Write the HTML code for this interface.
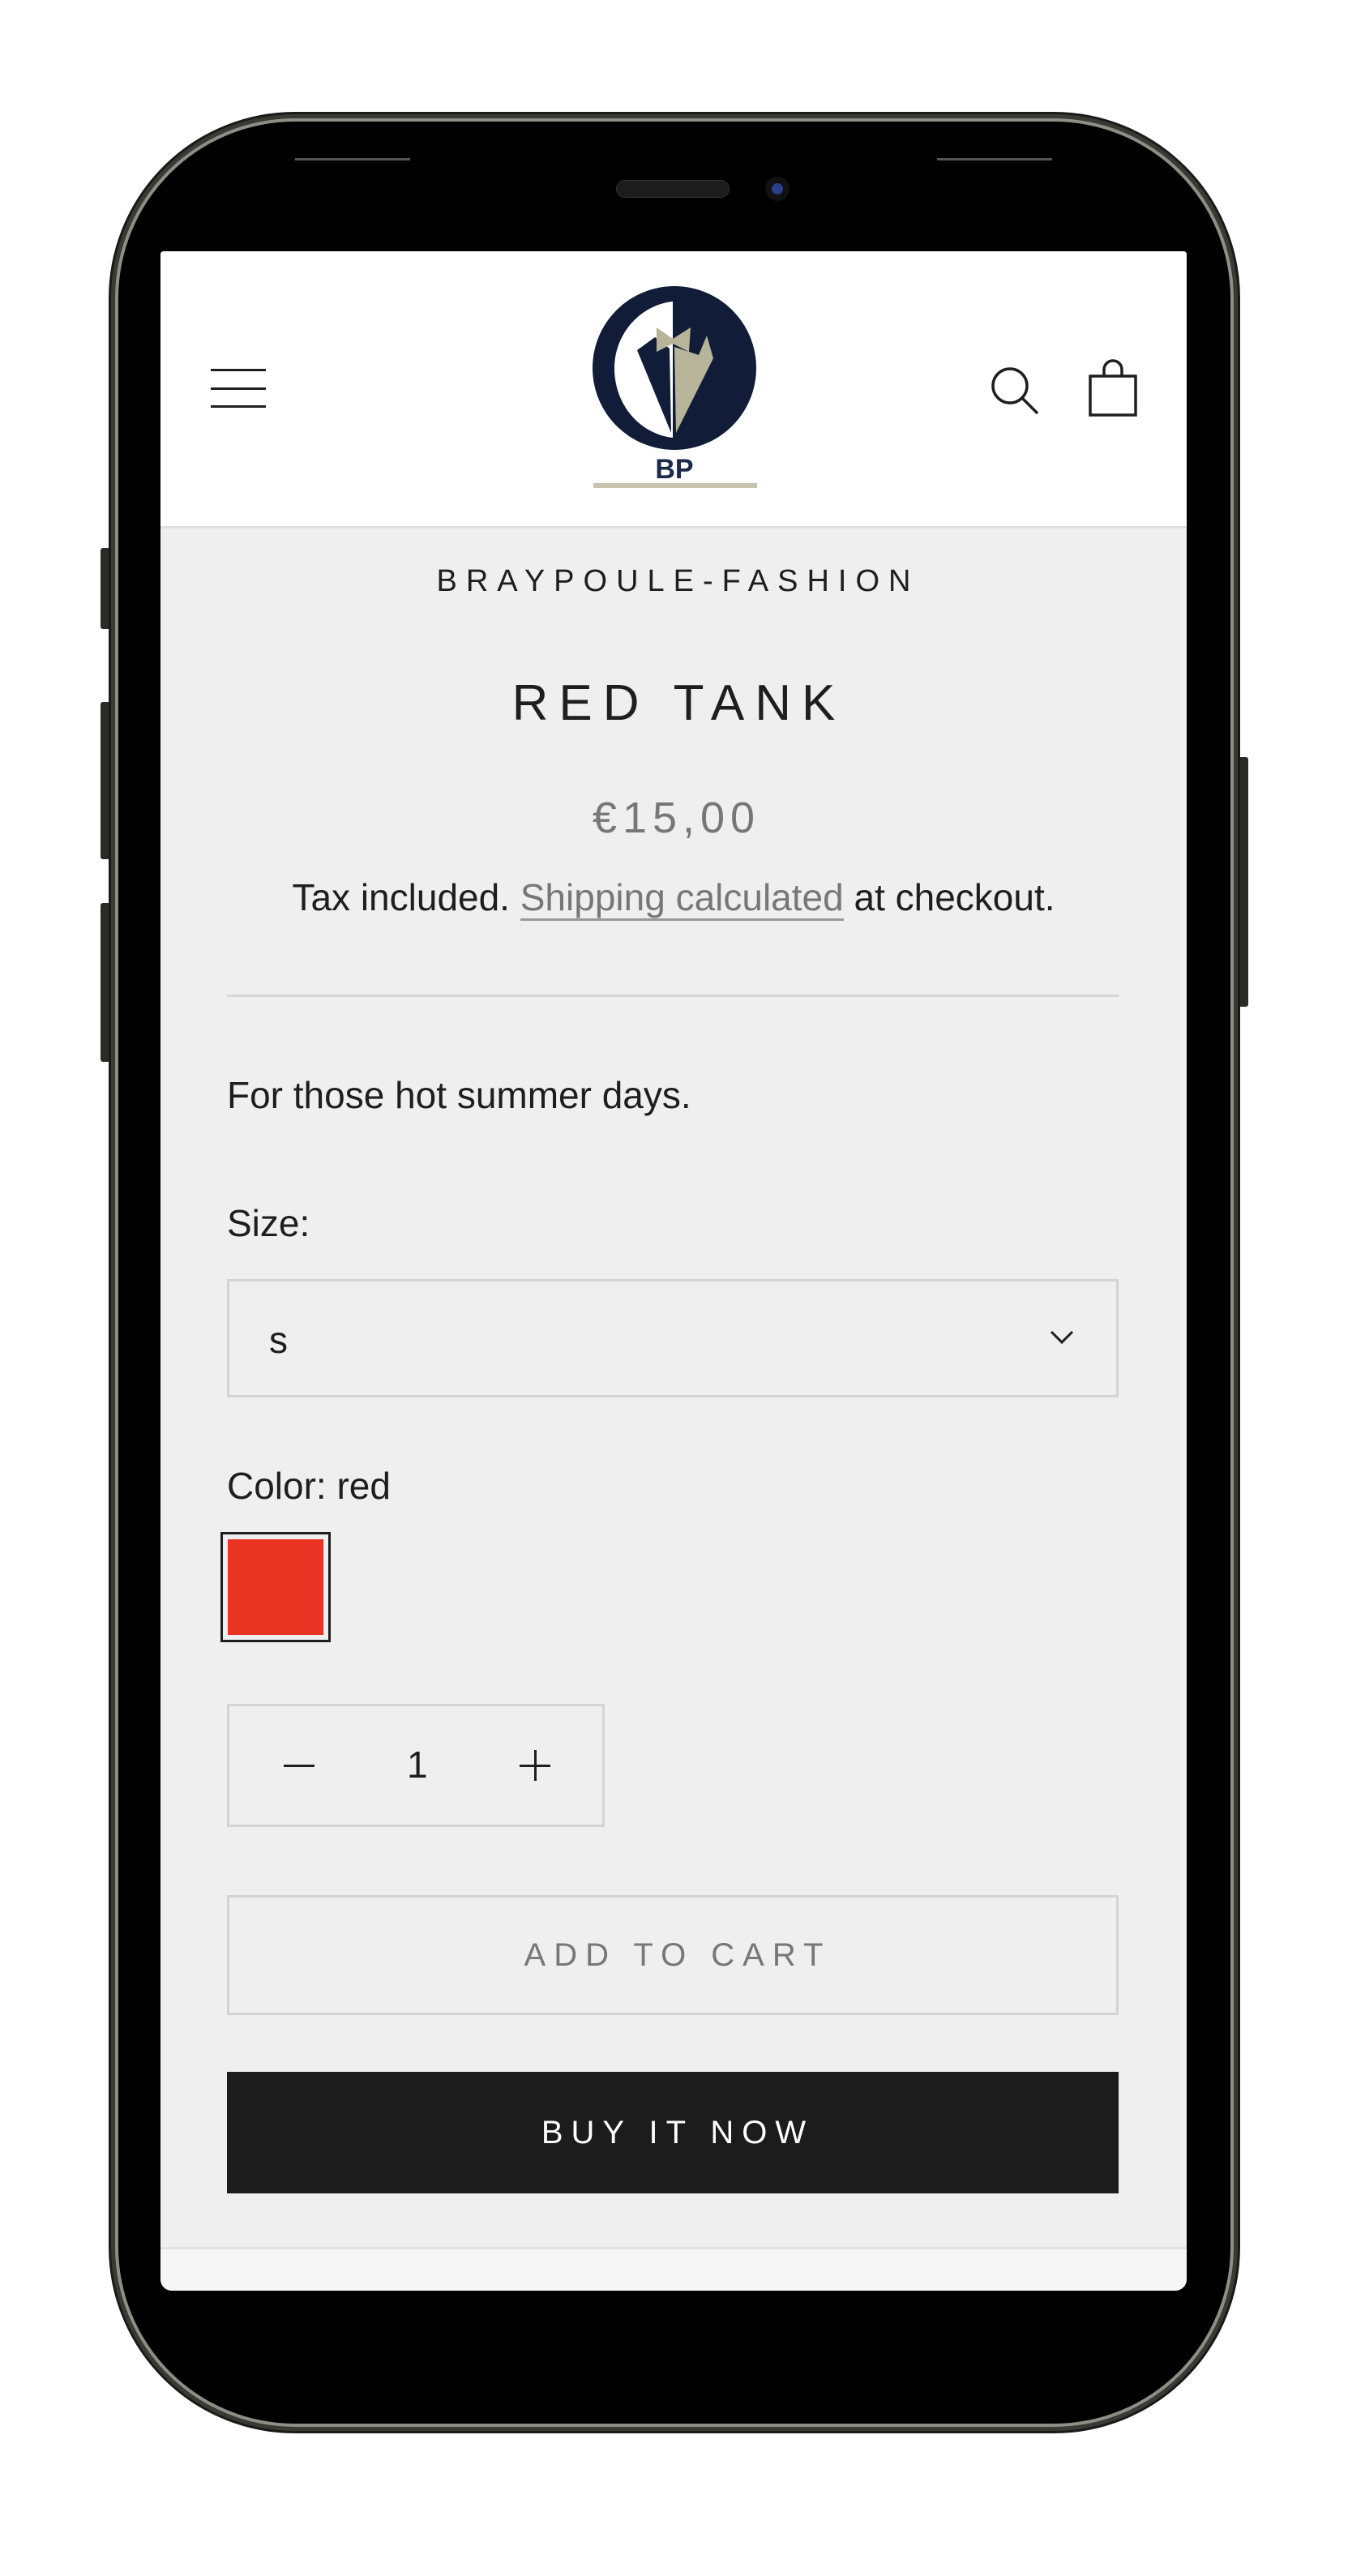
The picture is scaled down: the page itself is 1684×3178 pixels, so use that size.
<!DOCTYPE html>
<html><head><meta charset="utf-8"><style>
*{margin:0;padding:0;box-sizing:border-box}
html,body{width:1684px;height:3178px;background:#fff;overflow:hidden;font-family:"Liberation Sans",sans-serif}
.abs{position:absolute}
.c{position:absolute;left:198px;width:1266px;text-align:center;white-space:nowrap}
.t{position:absolute;white-space:nowrap;color:#1e1e1e;font-size:46px}
</style></head><body>
<!-- side buttons -->
<div class="abs" style="left:124px;top:676px;width:12px;height:100px;background:#2a2a26;border-radius:3px"></div>
<div class="abs" style="left:124px;top:866px;width:12px;height:194px;background:#2a2a26;border-radius:3px"></div>
<div class="abs" style="left:124px;top:1114px;width:12px;height:196px;background:#2a2a26;border-radius:3px"></div>
<div class="abs" style="left:1528px;top:934px;width:12px;height:308px;background:#2a2a26;border-radius:3px"></div>
<!-- phone body -->
<div class="abs" style="left:134px;top:138px;width:1396px;height:2864px;border-radius:230px;background:#3a3a35;border:3px solid #1a1a18"></div>
<div class="abs" style="left:146px;top:150px;width:1372px;height:2840px;border-radius:218px;background:#000;box-shadow:0 0 0 4px #8e8e86"></div>
<!-- top details -->
<div class="abs" style="left:364px;top:195px;width:142px;height:3px;background:#555"></div>
<div class="abs" style="left:1156px;top:195px;width:142px;height:3px;background:#555"></div>
<div class="abs" style="left:760px;top:222px;width:140px;height:22px;border-radius:11px;background:#1c1c1c;border:1px solid #333"></div>
<div class="abs" style="left:944px;top:218px;width:30px;height:30px;border-radius:50%;background:#111"></div>
<div class="abs" style="left:952px;top:226px;width:14px;height:14px;border-radius:50%;background:#2a3f8a"></div>
<!-- screen -->
<div class="abs" style="left:198px;top:310px;width:1266px;height:2516px;background:#efefef;overflow:hidden;border-radius:4px 4px 14px 14px">
  <div class="abs" style="left:0;top:0;width:1266px;height:342px;background:#fff;border-bottom:3px solid #e0e0e0"></div>
  <div class="abs" style="left:0;top:2462px;width:1266px;height:60px;background:#f6f6f6;border-top:3px solid #e2e2e2"></div>
</div>
<!-- hamburger -->
<div class="abs" style="left:260px;top:455px;width:68px;height:3px;background:#1e1e1e"></div>
<div class="abs" style="left:260px;top:478px;width:68px;height:3px;background:#1e1e1e"></div>
<div class="abs" style="left:260px;top:500px;width:68px;height:3px;background:#1e1e1e"></div>
<!-- logo -->
<svg class="abs" style="left:730px;top:352px" width="204" height="260" viewBox="0 0 204 260">
  <circle cx="102" cy="102" r="101" fill="#111d38"/>
  <path d="M100 20 C60 24 28 60 28 102 C28 150 62 184 100 188 Z" fill="#fff"/>
  <path d="M56 80 L98 182 L96 78 L78 64 Z" fill="#111d38"/>
  <path d="M80 52 L100 66 L122 52 L120 82 L100 72 L80 82 Z" fill="#b8b49a"/>
  <path d="M102 76 L104 182 L150 90 L142 62 L132 86 Z" fill="#b8b49a"/>
  <text x="102" y="238" text-anchor="middle" font-family="Liberation Sans" font-weight="bold" font-size="34" fill="#1b2a4a">BP</text>
  <rect x="2" y="244" width="202" height="6" fill="#c9c4ae"/>
</svg>
<!-- search -->
<svg class="abs" style="left:1220px;top:450px" width="66" height="66" viewBox="0 0 66 66"><circle cx="26" cy="26" r="21" fill="none" stroke="#1e1e1e" stroke-width="3.5"/><path d="M41 41 L60 60" stroke="#1e1e1e" stroke-width="3.5"/></svg>
<!-- bag -->
<svg class="abs" style="left:1340px;top:442px" width="66" height="74" viewBox="0 0 66 74"><rect x="5" y="22" width="56" height="48" fill="none" stroke="#1e1e1e" stroke-width="3.5"/><path d="M22 22 V14 a11 11 0 0 1 22 0 V22" fill="none" stroke="#1e1e1e" stroke-width="3.5"/></svg>
<!-- texts -->
<div class="c" style="top:696px;font-size:38px;letter-spacing:11px;color:#1e1e1e;padding-left:11px">BRAYPOULE-FASHION</div>
<div class="c" style="top:832px;font-size:62px;letter-spacing:13px;color:#1e1e1e;padding-left:13px">RED TANK</div>
<div class="c" style="top:978px;font-size:54px;letter-spacing:7px;color:#777;padding-left:7px">€15,00</div>
<div class="c" style="top:1080px;font-size:46px;color:#1e1e1e">Tax included. <span style="color:#777;border-bottom:3px solid #999">Shipping calculated</span> at checkout.</div>
<div class="abs" style="left:280px;top:1227px;width:1100px;height:3px;background:#d6d6d6"></div>
<div class="t" style="left:280px;top:1324px">For those hot summer days.</div>
<div class="t" style="left:280px;top:1482px">Size:</div>
<div class="abs" style="left:280px;top:1578px;width:1100px;height:146px;border:3px solid #d4d4d4"></div>
<div class="t" style="left:332px;top:1626px">s</div>
<svg class="abs" style="left:1294px;top:1640px" width="32" height="20" viewBox="0 0 32 20"><path d="M3 3 L16 16 L29 3" fill="none" stroke="#1e1e1e" stroke-width="3"/></svg>
<div class="t" style="left:280px;top:1806px">Color: red</div>
<div class="abs" style="left:272px;top:1890px;width:136px;height:136px;border:3px solid #1e1e1e"></div>
<div class="abs" style="left:281px;top:1899px;width:118px;height:118px;background:#e93323"></div>
<div class="abs" style="left:280px;top:2102px;width:466px;height:152px;border:3px solid #d4d4d4"></div>
<div class="abs" style="left:350px;top:2177px;width:38px;height:3px;background:#1e1e1e"></div>
<div class="t" style="left:502px;top:2150px;font-size:46px">1</div>
<div class="abs" style="left:641px;top:2177px;width:38px;height:3px;background:#1e1e1e"></div>
<div class="abs" style="left:659px;top:2159px;width:3px;height:38px;background:#1e1e1e"></div>
<div class="abs" style="left:280px;top:2338px;width:1100px;height:148px;border:3px solid #d4d4d4"></div>
<div class="c" style="top:2390px;font-size:40px;letter-spacing:10px;color:#777;padding-left:10px">ADD TO CART</div>
<div class="abs" style="left:280px;top:2556px;width:1100px;height:150px;background:#1c1c1c"></div>
<div class="c" style="top:2609px;font-size:40px;letter-spacing:10px;color:#fff;padding-left:10px">BUY IT NOW</div>
</body></html>
